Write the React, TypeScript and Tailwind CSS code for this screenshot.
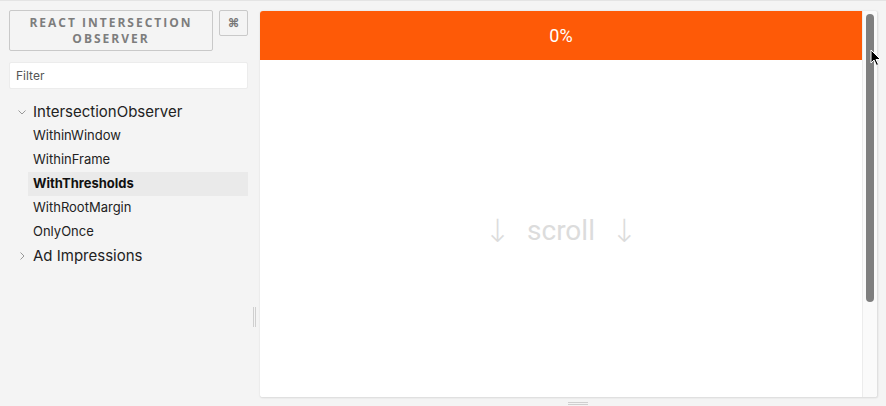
import React from "react";

const items = ["WithinWindow", "WithinFrame", "WithThresholds", "WithRootMargin", "OnlyOnce"];

const Chevron = ({ open }: { open: boolean }) => (
  <svg width="10" height="10" viewBox="0 0 10 10" className="text-[#999]">
    {open ? (
      <path d="M1.5 3.5 L5 7 L8.5 3.5" fill="none" stroke="currentColor" strokeWidth="1" />
    ) : (
      <path d="M3.5 1.5 L7 5 L3.5 8.5" fill="none" stroke="currentColor" strokeWidth="1" />
    )}
  </svg>
);

const Sidebar = () => {
  return (
    <div className="relative w-[260px] h-full pl-[9px] pr-[12px] pt-[9px] font-['Inter','Noto_Sans',sans-serif]">
      <div className="flex gap-[6px]">
        <button className="w-[204px] h-[41px] border border-[#c9c9c9] rounded-[2px] text-[12px] leading-[16px] font-bold tracking-[2px] text-[#7d7d7d] font-['Open_Sans',sans-serif]">
          REACT INTERSECTION
          <br />
          OBSERVER
        </button>
        <button className="w-[29px] h-[26px] border border-[#c9c9c9] rounded-[2px] text-[12px] font-bold text-[#777] flex items-center justify-center">
          ⌘
        </button>
      </div>
      <div className="mt-[11px] h-[27px] bg-white rounded-[2px] border border-[#ececec] flex items-center pl-[6px] text-[12px] text-[#555]">
        Filter
      </div>
      <div className="mt-[11px]">
        <div className="h-[24px] flex items-center pl-[8px]">
          <Chevron open={true} />
          <span className="ml-[6px] text-[15px] text-[#222]">IntersectionObserver</span>
        </div>
        {items.map((it) => (
          <div
            key={it}
            className={
              it === "WithThresholds"
                ? "ml-[19px] h-[24px] flex items-center pl-[5px] text-[13px] font-bold text-[#111] bg-[#eaeaea]"
                : "ml-[19px] h-[24px] flex items-center pl-[5px] text-[13px] text-[#222]"
            }
          >
            {it}
          </div>
        ))}
        <div className="h-[24px] flex items-center pl-[8px]">
          <Chevron open={false} />
          <span className="ml-[6px] text-[15px] text-[#222]">Ad Impressions</span>
        </div>
      </div>
      <div className="absolute left-[253px] top-[306px] flex gap-[1px]">
        <div className="w-[1px] h-[20px] bg-[#cfcfcf]" />
        <div className="w-[1px] h-[20px] bg-[#cfcfcf]" />
      </div>
    </div>
  );
};

const Preview = () => {
  return (
    <div className="relative mt-[10px] w-[618px] h-[387px] bg-white rounded-[3px] border-b border-r border-[#e0e0e0] shadow-[0_0_2px_rgba(0,0,0,0.12)] flex overflow-hidden">
      <div className="flex-1 flex flex-col">
        <div className="h-[49px] bg-[#fe5a07] flex items-center justify-center text-white text-[18px] font-['Roboto',sans-serif]">
          0%
        </div>
        <div className="flex-1 flex items-center justify-center gap-[16px] pt-[4px] text-[28px] text-[#dcdcdc] font-['Roboto',sans-serif]">
          <span className="text-[32px] font-['DejaVu_Sans',sans-serif] font-light">↓</span>
          <span>scroll</span>
          <span className="text-[32px] font-['DejaVu_Sans',sans-serif] font-light">↓</span>
        </div>
      </div>
      <div className="w-[15px] h-full bg-[#fafafa] border-l border-[#ececec] pt-[3px] pl-[3px]">
        <div className="w-[8px] h-[288px] rounded-full bg-[#7f7f7f]" />
      </div>
    </div>
  );
};

export default function App() {
  return (
    <div className="w-[886px] h-[406px] bg-[#f4f4f4] border-t border-[#e4e4e4] flex relative overflow-hidden">
      <Sidebar />
      <Preview />
      <div className="absolute left-[568px] top-[401px] flex flex-col gap-[1px]">
        <div className="w-[20px] h-[1px] bg-[#cfcfcf]" />
        <div className="w-[20px] h-[1px] bg-[#cfcfcf]" />
      </div>
      <svg className="absolute left-[870px] top-[48px]" width="12" height="18" viewBox="0 0 12 18">
        <path d="M1 1 L1 14 L4 11 L6.5 16.5 L8.5 15.5 L6 10.5 L10.5 10.5 Z" fill="#000" stroke="#fff" strokeWidth="1" />
      </svg>
    </div>
  );
}
